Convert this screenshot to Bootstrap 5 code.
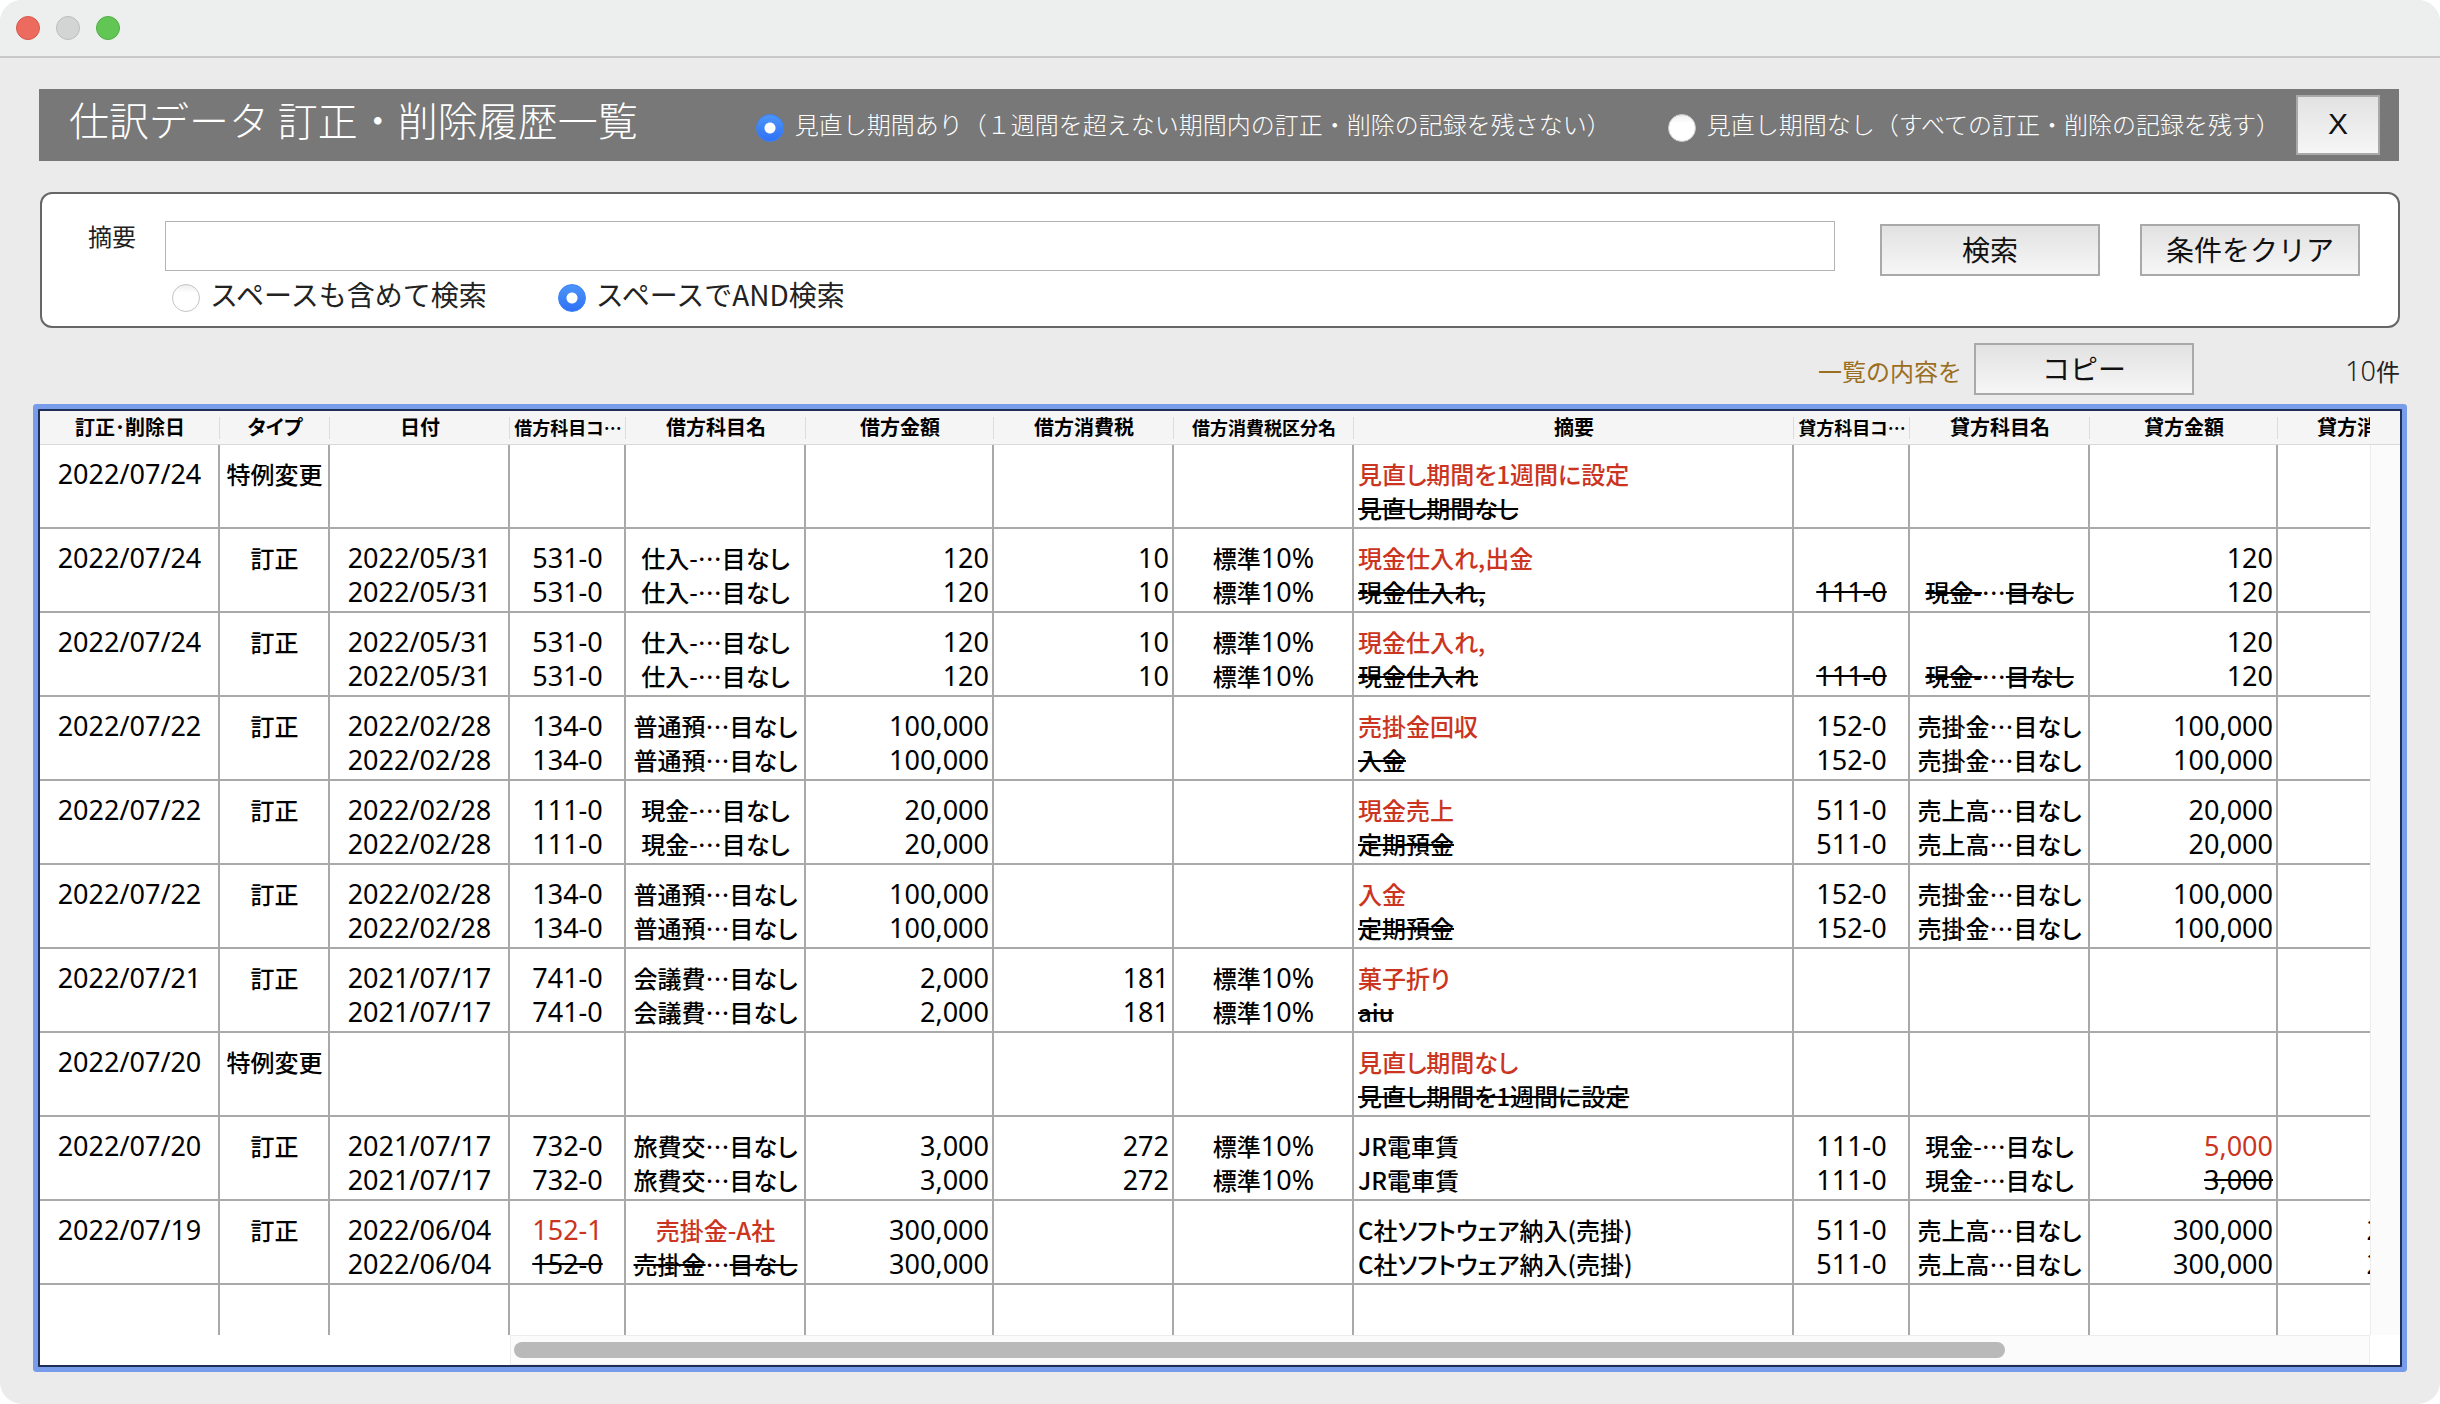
<!DOCTYPE html>
<html lang="ja">
<head>
<meta charset="utf-8">
<meta name="viewport" content="width=device-width, initial-scale=1">
<title>仕訳データ 訂正・削除履歴一覧</title>
<link rel="stylesheet" href="https://cdn.jsdelivr.net/npm/bootstrap@5.3.0/dist/css/bootstrap.min.css">
<style>
  body { background: #fff; font-family: "Noto Sans CJK JP", sans-serif; font-size: 24px; line-height: 34px; color: #222; }
  .app-window { min-height: 100vh; background: #ebebeb; border-radius: 22px; overflow: hidden; }
  .title-strip { height: 58px; background: #edefef; border-bottom: 2px solid #c9c9c9; padding: 0 16px; gap: 16px; }
  .light { width: 24px; height: 24px; border-radius: 50%; border: 1px solid; }
  .light-close { background: #ed6a5e; border-color: #d5584c; }
  .light-min { background: #d3d4d4; border-color: #bcbdbd; }
  .light-zoom { background: #62c655; border-color: #53ad46; }
  .page-area { padding: 31px 40px 35px; }

  .heading-bar { min-height: 72px; margin: 0 1px 0 -1px; background: #787878; color: #fff; padding: 0 19px 0 30px; }
  .heading-bar h1 { font-size: 40px; line-height: 48px; font-weight: 300; padding-bottom: 12px; }
  .heading-bar .choices { gap: 57px; font-weight: 300; }
  .choice { display: flex; align-items: center; gap: 11px; }
  .choice span { padding-bottom: 2px; }
  .choice .form-check-input { width: 28px; height: 28px; margin: 6px 0 0; border: 1px solid #c4c4c4; background: #fff linear-gradient(#eee, #fff 30%); flex: none; }
  .choice .form-check-input:checked { border-color: #3b82f6; background: radial-gradient(circle, #fff 5px, transparent 6px), linear-gradient(#4c95f8, #2f71f6); }
  .btn-flat { width: 220px; height: 52px; padding: 0 0 2px; border: 2px solid #a9a9a9; border-radius: 0; background: linear-gradient(#e2e2e2, #f6f6f6); color: #111; font-size: 28px; line-height: 40px; }
  .btn-close-x { width: 84px; height: 60px; font-size: 30px; font-family: "Liberation Sans", sans-serif; margin-left: 16px; }

  .search-panel { margin-top: 31px; min-height: 136px; background: #fff; border: 2px solid #666; border-radius: 12px; padding: 27px 38px 0 46px; }
  .search-panel .field-label { width: 77px; line-height: 30px; }
  .search-panel .form-control { height: 50px; border: 1px solid #b4b4b4; border-radius: 0; font-size: 24px; }
  .search-panel .buttons { gap: 40px; margin-left: 45px; padding-top: 3px; }
  .search-panel .modes { padding-left: 84px; gap: 71px; font-size: 28px; margin-top: 1px; }
  .search-panel .modes .choice { gap: 10px; }

  .copy-row { margin-top: 15px; }
  .copy-row .hint { color: #9b6f22; margin-right: 12px; padding-top: 4px; }
  .copy-row .total { width: 206px; text-align: right; padding-top: 4px; }

  .fig { font-family: "Noto Sans", sans-serif; font-size: 27px; font-weight: 400; }
  .grid-box { margin: 14px -2px 0; border: 2px solid #1d2f55; box-shadow: 0 0 0 5px #789bea; border-radius: 1px; background: #fff; }
  .grid-view { min-width: 0; overflow: hidden; }
  .history { width: 2316px; table-layout: fixed; border-collapse: separate; border-spacing: 0; color: #000; font-feature-settings: "palt"; }
  .history th { height: 34px; padding: 0; text-align: center; vertical-align: top; font-size: 20px; line-height: 32px; font-weight: 700; white-space: nowrap;
    border-bottom: 1px solid #d9d9d9; background: linear-gradient(#dcdcdc, #dcdcdc) right center / 1px 22px no-repeat #f5f5f5; }
  .history th.tight { font-size: 18px; }
  .history td { height: 84px; padding: 12px 3px 2px 4px; vertical-align: top; border-right: 2px solid #a9a9a9; border-bottom: 2px solid #a9a9a9; white-space: nowrap; overflow: hidden; font-weight: 500; text-align: center; }
  .history td div { height: 34px; line-height: 34px; }
  .history td.n { text-align: right; }
  .history td.t { text-align: left; }
  .history s { text-decoration-thickness: 2px; }
  .history tr.filler td { height: 50px; padding: 0; border-bottom: 0; }
  .changed { color: #cb3420; }
  .v-track { width: 30px; flex: none; border-left: 1px solid #ececec; background: #fbfbfb; }
  .v-track .cap { height: 34px; margin-left: -1px; background: #f5f5f5; border-bottom: 1px solid #d9d9d9; }
  .h-row { height: 30px; padding-left: 470px; }
  .h-track { flex: 1; border: 1px solid #ececec; background: #fbfbfb; padding: 6px 3px; }
  .h-thumb { width: 80.5%; height: 16px; border-radius: 8px; background: #b9b9b9; }
  .corner { width: 30px; }
</style>
</head>
<body>
<div class="app-window">
  <div class="title-strip d-flex align-items-center">
    <span class="light light-close"></span><span class="light light-min"></span><span class="light light-zoom"></span>
  </div>
  <main class="page-area">
    <header class="heading-bar d-flex align-items-center">
      <h1 class="m-0 me-auto">仕訳データ 訂正・削除履歴一覧</h1>
      <div class="choices d-flex">
        <label class="choice"><input class="form-check-input" type="radio" name="period" checked><span>見直し期間あり（１週間を超えない期間内の訂正・削除の記録を残さない）</span></label>
        <label class="choice"><input class="form-check-input" type="radio" name="period"><span>見直し期間なし（すべての訂正・削除の記録を残す）</span></label>
      </div>
      <button type="button" class="btn btn-flat btn-close-x">X</button>
    </header>

    <form class="search-panel">
      <div class="d-flex align-items-start">
        <label class="field-label" for="memo">摘要</label>
        <input class="form-control flex-fill w-auto" type="text" id="memo">
        <div class="buttons d-flex">
          <button type="button" class="btn btn-flat">検索</button>
          <button type="button" class="btn btn-flat">条件をクリア</button>
        </div>
      </div>
      <div class="modes d-flex">
        <label class="choice"><input class="form-check-input" type="radio" name="mode"><span>スペースも含めて検索</span></label>
        <label class="choice"><input class="form-check-input" type="radio" name="mode" checked><span>スペースでAND検索</span></label>
      </div>
    </form>

    <div class="copy-row d-flex align-items-center justify-content-end">
      <span class="hint">一覧の内容を</span>
      <button type="button" class="btn btn-flat">コピー</button>
      <span class="total"><span class="fig fw-light">10</span>件</span>
    </div>

    <section class="grid-box">
      <div class="d-flex">
        <div class="grid-view flex-fill">
          <table class="history">
            <colgroup>
              <col style="width:180px"><col style="width:110px"><col style="width:180px"><col style="width:116px"><col style="width:180px"><col style="width:188px"><col style="width:180px"><col style="width:180px"><col style="width:440px"><col style="width:116px"><col style="width:180px"><col style="width:188px"><col style="width:178px">
            </colgroup>
            <thead>
              <tr>
                <th>訂正･削除日</th><th>タイプ</th><th>日付</th><th class="tight">借方科目コ…</th><th>借方科目名</th><th>借方金額</th><th>借方消費税</th><th class="tight">借方消費税区分名</th><th>摘要</th><th class="tight">貸方科目コ…</th><th>貸方科目名</th><th>貸方金額</th><th>貸方消費税</th>
              </tr>
            </thead>
            <tbody id="rows"></tbody>
          </table>
        </div>
        <div class="v-track"><div class="cap"></div></div>
      </div>
      <div class="h-row d-flex">
        <div class="h-track"><div class="h-thumb"></div></div>
        <div class="corner"></div>
      </div>
    </section>
  </main>
</div>

<script src="https://cdn.jsdelivr.net/npm/bootstrap@5.3.0/dist/js/bootstrap.bundle.min.js"></script>
<script>
  // Each cell is [after, before]; "+" marks a changed value, "~" a value that was replaced.
  const both = v => [v, v];
  const rows = [
    ['2022/07/24', '特例変更', [], [], [], [], [], [], ['+見直し期間を1週間に設定', '~見直し期間なし'], [], [], [], []],
    ['2022/07/24', '訂正', both('2022/05/31'), both('531-0'), both('仕入-…目なし'), both('120'), both('10'), both('標準10%'), ['+現金仕入れ,出金', '~現金仕入れ,'], ['', '~111-0'], ['', '~現金-…目なし'], both('120'), []],
    ['2022/07/24', '訂正', both('2022/05/31'), both('531-0'), both('仕入-…目なし'), both('120'), both('10'), both('標準10%'), ['+現金仕入れ,', '~現金仕入れ'], ['', '~111-0'], ['', '~現金-…目なし'], both('120'), []],
    ['2022/07/22', '訂正', both('2022/02/28'), both('134-0'), both('普通預…目なし'), both('100,000'), [], [], ['+売掛金回収', '~入金'], both('152-0'), both('売掛金…目なし'), both('100,000'), []],
    ['2022/07/22', '訂正', both('2022/02/28'), both('111-0'), both('現金-…目なし'), both('20,000'), [], [], ['+現金売上', '~定期預金'], both('511-0'), both('売上高…目なし'), both('20,000'), []],
    ['2022/07/22', '訂正', both('2022/02/28'), both('134-0'), both('普通預…目なし'), both('100,000'), [], [], ['+入金', '~定期預金'], both('152-0'), both('売掛金…目なし'), both('100,000'), []],
    ['2022/07/21', '訂正', both('2021/07/17'), both('741-0'), both('会議費…目なし'), both('2,000'), both('181'), both('標準10%'), ['+菓子折り', '~aiu'], [], [], [], []],
    ['2022/07/20', '特例変更', [], [], [], [], [], [], ['+見直し期間なし', '~見直し期間を1週間に設定'], [], [], [], []],
    ['2022/07/20', '訂正', both('2021/07/17'), both('732-0'), both('旅費交…目なし'), both('3,000'), both('272'), both('標準10%'), both('JR電車賃'), both('111-0'), both('現金-…目なし'), ['+5,000', '~3,000'], []],
    ['2022/07/19', '訂正', both('2022/06/04'), ['+152-1', '~152-0'], ['+売掛金-A社', '~売掛金…目なし'], both('300,000'), [], [], both('C社ソフトウェア納入(売掛)'), both('511-0'), both('売上高…目なし'), both('300,000'), both('27,272')]
  ];
  const align = ['', '', '', '', '', 'n', 'n', '', 't', '', '', 'n', 'n'];
  const figures = s => /^[\d\/,-]+$/.test(s) ? `<span class="fig">${s}</span>` : s.replace(/\d+%/, m => `<span class="fig">${m}</span>`);
  function line(v) {
    if (v[0] === '+') return `<div class="changed">${figures(v.slice(1))}</div>`;
    if (v[0] === '~') return `<div>${v.slice(1).split('…').map(p => `<s>${figures(p)}</s>`).join('…')}</div>`;
    return `<div>${figures(v)}</div>`;
  }
  document.getElementById('rows').innerHTML =
    rows.map(r => '<tr>' + r.map((c, i) => `<td class="${align[i]}">${[].concat(c).map(line).join('')}</td>`).join('') + '</tr>').join('') +
    '<tr class="filler">' + '<td></td>'.repeat(13) + '</tr>';
</script>
</body>
</html>
